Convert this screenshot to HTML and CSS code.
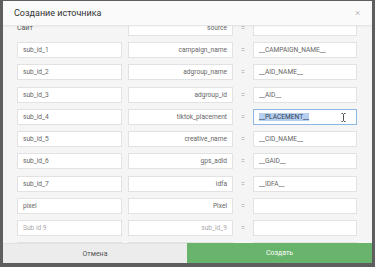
FILE: index.html
```html
<!DOCTYPE html>
<html lang="ru">
<head>
<meta charset="utf-8">
<link rel="stylesheet" href="styles.css">
</head>
<body>
<div class="modal">
  <div class="header">
    <div class="title">Создание источника</div>
    <div class="close">×</div>
  </div>
  <div class="content">
    <div class="rows">
      <div class="label">Сайт</div><div class="field right">source</div><div class="eq">=</div><div class="field"></div>
      <div class="field">sub_id_1</div><div class="field right">campaign_name</div><div class="eq">=</div><div class="field">__CAMPAIGN_NAME__</div>
      <div class="field">sub_id_2</div><div class="field right">adgroup_name</div><div class="eq">=</div><div class="field">__AID_NAME__</div>
      <div class="field">sub_id_3</div><div class="field right">adgroup_id</div><div class="eq">=</div><div class="field">__AID__</div>
      <div class="field">sub_id_4</div><div class="field right">tiktok_placement</div><div class="eq">=</div><div class="field focus"><span class="sel">__PLACEMENT__</span><svg class="ibeam" width="5" height="9" viewBox="0 0 5 9"><path d="M0.5 0.5h1.5M3 0.5h1.5M2.5 1v7M0.5 8.5h1.5M3 8.5h1.5" stroke="#444" stroke-width="0.9" fill="none"/></svg></div>
      <div class="field">sub_id_5</div><div class="field right">creative_name</div><div class="eq">=</div><div class="field">__CID_NAME__</div>
      <div class="field">sub_id_6</div><div class="field right">gps_adid</div><div class="eq">=</div><div class="field">__GAID__</div>
      <div class="field">sub_id_7</div><div class="field right">idfa</div><div class="eq">=</div><div class="field">__IDFA__</div>
      <div class="field">pixel</div><div class="field right">Pixel</div><div class="eq">=</div><div class="field"></div>
      <div class="field ph">Sub id 9</div><div class="field right ph">sub_id_9</div><div class="eq">=</div><div class="field"></div>
      <div class="field ph"></div><div class="field right ph"></div><div class="eq">=</div><div class="field"></div>
    </div>
  </div>
  <div class="footer">
    <div class="btn cancel">Отмена</div>
    <div class="btn create">Создать</div>
  </div>
</div>
</body>
</html>
```

FILE: styles.css
```css
html, body {
  margin: 0;
  padding: 0;
}
body {
  width: 375px;
  height: 267px;
  background: #5d5e5d;
  font-family: Roboto, "Noto Sans", sans-serif;
  overflow: hidden;
}
.modal {
  margin: 1px 3px 0 3px;
  height: 262px;
  background: #f5f5f5;
  display: flex;
  flex-direction: column;
  overflow: hidden;
}
.header {
  flex: 0 0 24px;
  display: flex;
  align-items: center;
  justify-content: space-between;
  padding: 0 12px 0 11px;
  background: #fafafa;
  border-bottom: 1px solid #e6e6e6;
  box-shadow: 0 1px 2px rgba(0,0,0,0.04);
  position: relative;
  z-index: 1;
}
.title {
  font-size: 9px;
  color: #333;
}
.close {
  font-size: 9px;
  color: #bbb;
  line-height: 1;
}
.content {
  flex: 1 1 auto;
  overflow: hidden;
  padding: 0 15px 0 14px;
}
.rows {
  margin-top: -6px;
  display: grid;
  grid-template-columns: 105px 105px 8px 104px;
  grid-auto-rows: 16px;
  column-gap: 6px;
  row-gap: 6.22px;
}
.label {
  font-size: 7px;
  color: #555;
  display: flex;
  align-items: center;
}
.field {
  box-sizing: border-box;
  height: 16px;
  background: #fff;
  border: 1px solid #e2e2e2;
  font-size: 6.6px;
  color: #666;
  padding: 0 5px;
  display: flex;
  align-items: center;
  white-space: nowrap;
  position: relative;
}
.field.right {
  justify-content: flex-end;
}
.field.ph {
  color: #aaa;
}
.field.focus {
  border-color: #8fb5e2;
}
.sel {
  background: #b7cfef;
  color: #2d3f58;
}
.ibeam {
  position: absolute;
  left: 87px;
  top: 3px;
}
.eq {
  font-size: 7px;
  color: #999;
  display: flex;
  align-items: center;
  justify-content: center;
}
.footer {
  flex: 0 0 20px;
  display: grid;
  grid-template-columns: 184px 1fr;
  position: relative;
  z-index: 1;
}
.btn {
  display: flex;
  align-items: center;
  justify-content: center;
  font-size: 7px;
}
.cancel {
  background: #ececec;
  color: #555;
  border-top: 1px solid #e0e0e0;
}
.create {
  background: #69b46c;
  color: #fff;
}
```
